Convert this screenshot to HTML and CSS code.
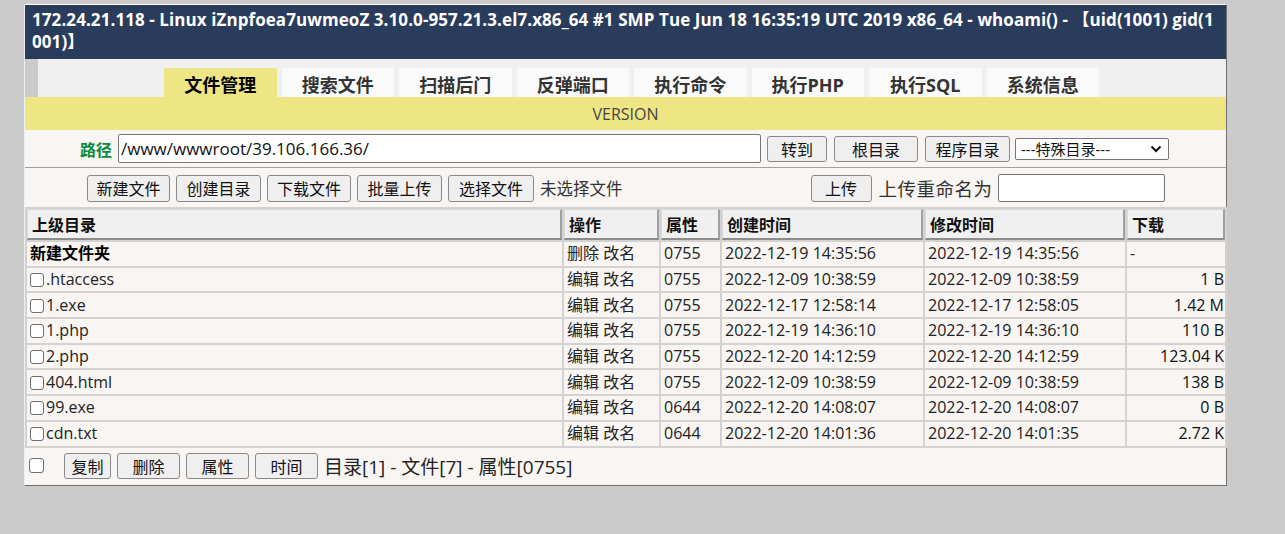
FILE: index.html
```html
<!DOCTYPE html>
<html lang="zh-CN">
<head>
<meta charset="utf-8">
<title>文件管理</title>
<link rel="stylesheet" href="styles.css">
</head>
<body>
<div class="wrap">
  <div class="head">172.24.21.118 - Linux iZnpfoea7uwmeoZ 3.10.0-957.21.3.el7.x86_64 #1 SMP Tue Jun 18 16:35:19 UTC 2019 x86_64 - whoami() - 【uid(1001) gid(1001)】</div>
  <div class="nav">
    <div class="nav-edge"></div>
    <ul class="tabs">
      <li class="tab active">文件管理</li>
      <li class="tab">搜索文件</li>
      <li class="tab">扫描后门</li>
      <li class="tab">反弹端口</li>
      <li class="tab">执行命令</li>
      <li class="tab">执行PHP</li>
      <li class="tab">执行SQL</li>
      <li class="tab">系统信息</li>
    </ul>
  </div>
  <div class="ver">VERSION</div>
  <div class="pathrow">
    <span class="plabel">路径</span>
    <input class="pinput" type="text" value="/www/wwwroot/39.106.166.36/">
    <button class="btn w60">转到</button>
    <button class="btn w84">根目录</button>
    <button class="btn w85">程序目录</button>
    <div class="sel"><span>---特殊目录---</span><svg width="12" height="8" viewBox="0 0 12 8"><path d="M1.5 1.5 L6 6 L10.5 1.5" fill="none" stroke="#111" stroke-width="2"/></svg></div>
  </div>
  <div class="toolrow">
    <div class="tgroup">
      <button class="btn w83">新建文件</button>
      <button class="btn w85">创建目录</button>
      <button class="btn w84">下载文件</button>
      <button class="btn w85">批量上传</button>
      <button class="btn w86">选择文件</button>
      <span class="nofile">未选择文件</span>
    </div>
    <div class="ugroup">
      <button class="btn w61 up">上传</button>
      <span class="rename">上传重命名为</span>
      <input class="rinput" type="text">
    </div>
  </div>
  <table class="files">
    <colgroup>
      <col class="c1"><col class="c2"><col class="c3"><col class="c4"><col class="c5"><col class="c6">
    </colgroup>
    <thead>
      <tr><th>上级目录</th><th>操作</th><th>属性</th><th>创建时间</th><th>修改时间</th><th>下载</th></tr>
    </thead>
    <tbody>
      <tr><td class="dir">新建文件夹</td><td>删除 改名</td><td>0755</td><td>2022-12-19 14:35:56</td><td>2022-12-19 14:35:56</td><td>-</td></tr>
      <tr><td><input type="checkbox" class="cb">.htaccess</td><td>编辑 改名</td><td>0755</td><td>2022-12-09 10:38:59</td><td>2022-12-09 10:38:59</td><td class="sz">1 B</td></tr>
      <tr><td><input type="checkbox" class="cb">1.exe</td><td>编辑 改名</td><td>0755</td><td>2022-12-17 12:58:14</td><td>2022-12-17 12:58:05</td><td class="sz">1.42 M</td></tr>
      <tr><td><input type="checkbox" class="cb">1.php</td><td>编辑 改名</td><td>0755</td><td>2022-12-19 14:36:10</td><td>2022-12-19 14:36:10</td><td class="sz">110 B</td></tr>
      <tr><td><input type="checkbox" class="cb">2.php</td><td>编辑 改名</td><td>0755</td><td>2022-12-20 14:12:59</td><td>2022-12-20 14:12:59</td><td class="sz">123.04 K</td></tr>
      <tr><td><input type="checkbox" class="cb">404.html</td><td>编辑 改名</td><td>0755</td><td>2022-12-09 10:38:59</td><td>2022-12-09 10:38:59</td><td class="sz">138 B</td></tr>
      <tr><td><input type="checkbox" class="cb">99.exe</td><td>编辑 改名</td><td>0644</td><td>2022-12-20 14:08:07</td><td>2022-12-20 14:08:07</td><td class="sz">0 B</td></tr>
      <tr><td><input type="checkbox" class="cb">cdn.txt</td><td>编辑 改名</td><td>0644</td><td>2022-12-20 14:01:36</td><td>2022-12-20 14:01:35</td><td class="sz">2.72 K</td></tr>
    </tbody>
  </table>
  <div class="foot">
    <input type="checkbox" class="cball">
    <button class="btn w47">复制</button>
    <button class="btn w63">删除</button>
    <button class="btn w63">属性</button>
    <button class="btn w63">时间</button>
    <span class="summary">目录[1] - 文件[7] - 属性[0755]</span>
  </div>
</div>
</body>
</html>
```
FILE: styles.css
```css
* { box-sizing: border-box; }
html, body { margin: 0; padding: 0; }
body {
  background: #cbcbcb;
  font-family: "Open Sans", "Noto Sans CJK SC", sans-serif;
  font-size: 16px;
  color: #222;
}
.wrap {
  margin: 4px 0 0 24px;
  width: 1203px;
  background: #f8f5f2;
  border-top: 1px solid #fdfdfd;
  border-left: 1px solid #efefef;
  border-right: 1px solid #6f6f6f;
  border-bottom: 1px solid #6f6f6f;
}
.head {
  background: #293c5c;
  color: #fff;
  font-weight: bold;
  font-size: 17px;
  letter-spacing: 0.08px;
  line-height: 22px;
  padding: 4px 3px 6px 7px;
  height: 54px;
  word-break: break-all;
}
.nav {
  display: flex;
  height: 38px;
  background: #f0f0f0;
}
.nav-edge { width: 13px; background: #cbcbcb; }
.tabs {
  display: flex;
  gap: 5px;
  list-style: none;
  margin: 0 0 0 126px;
  padding: 0;
  align-self: flex-end;
}
.tab {
  width: 112.5px;
  height: 29px;
  background: #fafafa;
  font-weight: bold;
  font-size: 18px;
  line-height: 34px;
  text-align: center;
  color: #333;
}
.tab.active { background: #eee685; color: #000; }
.ver {
  height: 33px;
  background: #eee685;
  text-align: center;
  line-height: 34px;
  font-size: 16px;
  color: #444;
}
.pathrow {
  height: 38px;
  display: flex;
  align-items: center;
  padding-left: 55px;
  border-bottom: 1px solid #a0a0a0;
}
.plabel {
  color: #0a8a3c;
  font-weight: bold;
  font-size: 16px;
  width: 32px;
  margin-right: 6px;
}
.pinput {
  width: 643px;
  height: 29px;
  border: 1px solid #767676;
  border-radius: 2px;
  font: 17px "Open Sans", "Noto Sans CJK SC", sans-serif;
  color: #111;
  padding: 0 2px;
  margin: 0 6px 0 0;
  background: #fff;
}
.btn {
  height: 26px;
  padding: 0 9px;
  margin: 0;
  background: #efefef;
  border: 1px solid #8a8a8a;
  border-radius: 3px;
  font: 16px "Noto Sans CJK SC", "Open Sans", sans-serif;
  line-height: 22px;
  color: #111;
}
.pathrow .btn { margin-right: 7px; }
.pathrow .w85 { margin-right: 5px; }
.w47 { width: 47px; padding: 0; }
.w60 { width: 60px; padding: 0; }
.w61 { width: 61px; padding: 0; }
.w63 { width: 63px; padding: 0; }
.w83 { width: 83px; padding: 0; }
.w84 { width: 84px; padding: 0; }
.w85 { width: 85px; padding: 0; }
.w86 { width: 86px; padding: 0; }
.sel {
  width: 154px;
  height: 22px;
  border: 1px solid #767676;
  border-radius: 2px;
  background: #fff;
  display: flex;
  align-items: center;
  justify-content: space-between;
  padding: 0 6px 0 5px;
  font-size: 15px;
  color: #111;
  line-height: 20px;
}
.toolrow {
  height: 39px;
  display: flex;
  align-items: center;
  padding-top: 1px;
}
.tgroup {
  display: flex;
  align-items: center;
  gap: 6px;
  margin-left: 62px;
}
.tgroup .btn { height: 27px; }
.nofile { color: #333; font-size: 16.5px; }
.ugroup {
  display: flex;
  align-items: center;
  margin-left: 188px;
}
.up { height: 27px; margin-right: 7px; }
.rename { font-size: 18.5px; color: #333; margin-right: 5px; letter-spacing: 0.5px; }
.rinput {
  width: 167px;
  height: 28px;
  border: 1px solid #767676;
  border-radius: 2px;
  background: #fff;
  margin: 0;
}
.files {
  width: 1201px;
  table-layout: fixed;
  border-collapse: separate;
  border-spacing: 2px;
  background: #d2d2d2;
  margin: 0;
}
.c1 { width: 535px; }
.c2 { width: 95px; }
.c3 { width: 59px; }
.c4 { width: 201px; }
.c5 { width: 200px; }
.c6 { width: 98px; }
.files th {
  height: 31px;
  background: #f0f0f0;
  text-align: left;
  font-weight: bold;
  padding: 0 4px;
  border-top: 1px solid #d8d8d8;
  border-left: 1px solid #d8d8d8;
  border-right: 2px solid #a0a0a0;
  border-bottom: 2px solid #8c8c8c;
  color: #111;
  font-size: 16px;
}
.files td {
  height: 23.7px;
  background: #f8f5f2;
  padding: 0 3px 0 3px;
  white-space: nowrap;
  overflow: hidden;
  line-height: 23px;
  color: #222;
}
.files td.dir { font-weight: bold; color: #000; }
.files td.sz { text-align: right; padding-right: 1px; color: #111; }
.cb, .cball {
  appearance: none;
  -webkit-appearance: none;
  background: #fff;
  border: 1px solid #6e6e6e;
  border-radius: 3px;
}
.cb {
  width: 14px;
  height: 14px;
  margin: 0 2px 0 0;
  vertical-align: -2px;
}
.foot {
  height: 37px;
  display: flex;
  align-items: center;
  padding-left: 4px;
  padding-bottom: 1px;
}
.cball { width: 15px; height: 15px; margin: 0 20px 0 0; }
.foot .btn { height: 26px; margin-right: 6px; }
.summary { font-size: 19px; color: #222; margin-left: 0; }
```
